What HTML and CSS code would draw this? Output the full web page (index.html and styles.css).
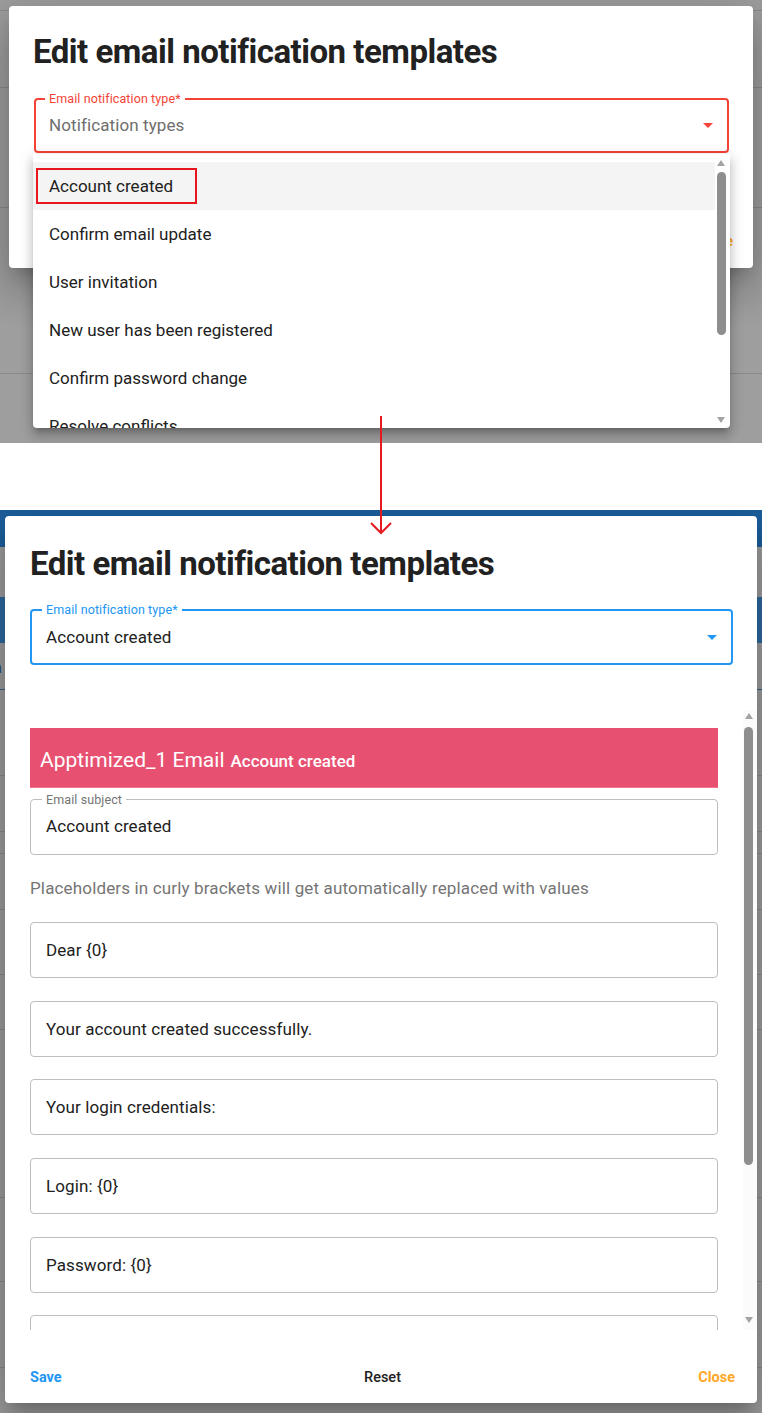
FILE: index.html
```html
<!DOCTYPE html>
<html lang="en">
<head>
<meta charset="utf-8">
<title>Edit email notification templates</title>
<link rel="stylesheet" href="styles.css">
</head>
<body>
<div class="sheet">

  <!-- Step 1: the type select is open -->
  <section class="shot shot-a">
    <div class="page page-a">
      <div class="pa-row pa-1"></div>
      <div class="pa-row pa-2"></div>
      <div class="pa-row pa-3"></div>
      <div class="pa-row pa-4"></div>
    </div>

    <div class="dialog dialog-a">
      <h1 class="dialog-title">Edit email notification templates</h1>
      <fieldset class="field select select-error select-a">
        <legend>Email notification type*</legend>
        <div class="select-row">
          <span class="select-value is-placeholder">Notification types</span>
          <svg class="caret" viewBox="0 0 24 24" width="24" height="24"><path d="M7 10l5 5 5-5z"/></svg>
        </div>
      </fieldset>
      <div class="actions actions-a">
        <button class="act act-close">Close</button>
      </div>
    </div>

    <div class="menu">
      <ul class="menu-list">
        <li class="menu-item is-hover">Account created<span class="mark"></span></li>
        <li class="menu-item">Confirm email update</li>
        <li class="menu-item">User invitation</li>
        <li class="menu-item">New user has been registered</li>
        <li class="menu-item">Confirm password change</li>
        <li class="menu-item">Resolve conflicts</li>
      </ul>
      <div class="scrollbar sb-menu">
        <span class="sb-up"></span>
        <span class="sb-thumb"></span>
        <span class="sb-fill"></span>
        <span class="sb-down"></span>
      </div>
    </div>
  </section>

  <div class="gap"></div>

  <!-- Step 2: template for the chosen type -->
  <section class="shot shot-b">
    <div class="page page-b">
      <div class="pb-appbar"></div>
      <div class="pb-row pb-sub"></div>
      <div class="pb-band"></div>
      <div class="pb-row pb-tabs"><span class="pb-tab">n</span></div>
      <div class="pb-row pb-r1"></div>
      <div class="pb-row pb-r2"></div>
      <div class="pb-row pb-r3"></div>
      <div class="pb-row pb-r4"></div>
      <div class="pb-row pb-r5"></div>
      <div class="pb-row pb-r6"></div>
      <div class="pb-row pb-r7"></div>
      <div class="pb-row pb-r8"></div>
      <div class="pb-row pb-r9"></div>
    </div>

    <div class="dialog dialog-b">
      <h1 class="dialog-title">Edit email notification templates</h1>
      <fieldset class="field select select-focus select-b">
        <legend>Email notification type*</legend>
        <div class="select-row">
          <span class="select-value">Account created</span>
          <svg class="caret" viewBox="0 0 24 24" width="24" height="24"><path d="M7 10l5 5 5-5z"/></svg>
        </div>
      </fieldset>

      <div class="scroll">
        <div class="scroll-body">
          <div class="banner">
            <span class="banner-app">Apptimized_1 Email</span>
            <span class="banner-type">Account created</span>
          </div>

          <fieldset class="field subject">
            <legend>Email subject</legend>
            <div class="subject-value">Account created</div>
          </fieldset>

          <p class="hint">Placeholders in curly brackets will get automatically replaced with values</p>

          <div class="lines">
            <div class="line-input">Dear {0}</div>
            <div class="line-input">Your account created successfully.</div>
            <div class="line-input">Your login credentials:</div>
            <div class="line-input">Login: {0}</div>
            <div class="line-input">Password: {0}</div>
            <div class="line-input"></div>
          </div>
        </div>
        <div class="scrollbar sb-dialog">
          <span class="sb-up"></span>
          <span class="sb-thumb"></span>
          <span class="sb-fill"></span>
          <span class="sb-down"></span>
        </div>
      </div>

      <div class="actions actions-b">
        <button class="act act-save">Save</button>
        <button class="act act-reset">Reset</button>
        <button class="act act-close">Close</button>
      </div>
    </div>
  </section>

  <svg class="flow-arrow" width="762" height="1413" viewBox="0 0 762 1413">
    <path d="M381 416V533M371 523l10 10 10-10" />
  </svg>
</div>
</body>
</html>
```

FILE: styles.css
```css
* { box-sizing: border-box; }

html, body {
  margin: 0;
  padding: 0;
  background: #fff;
}

body {
  width: 762px;
  font-family: Roboto, "Liberation Sans", sans-serif;
  color: #212121;
}

.sheet {
  position: relative;
  width: 762px;
}

/* ---------- screenshot frames ---------- */
.shot {
  position: relative;
  overflow: hidden;
  background: #9e9e9e;
}
.shot-a { height: 443px; }
.shot-b { height: 903px; }
.gap { height: 67px; }

/* dimmed page behind the modal */
.page { display: flex; flex-direction: column; }
.pa-row { border-bottom: 1px solid #8a8a8a; }
.pa-1 { height: 11px; }
.pa-2 { height: 77px; }
.pa-3 { height: 120px; }
.pa-4 { height: 166px; }

.pb-appbar { height: 37px; background: #1c5f9c; }
.pb-row { border-bottom: 1px solid #8a8a8a; }
.pb-sub { height: 50px; border-bottom: 0; }
.pb-band { height: 46px; background: #2d6aa2; }
.pb-tabs { height: 47px; display: flex; align-items: center; border-bottom-color: #375f86; }
.pb-tab { font-size: 16px; color: #27496b; margin-left: -7px; padding-top: 2px; }
.pb-r1 { height: 86px; }
.pb-r2 { height: 56px; }
.pb-r3 { height: 22px; }
.pb-r4 { height: 56px; }
.pb-r5 { height: 65px; }
.pb-r6 { height: 55px; }
.pb-r7 { height: 168px; }
.pb-r8 { height: 84px; }
.pb-r9 { height: 86px; }

/* ---------- dialog ---------- */
.dialog {
  position: absolute;
  display: flex;
  flex-direction: column;
  background: #fff;
  border-radius: 4px;
  box-shadow: 0 11px 15px -7px rgba(0,0,0,.2),
              0 24px 38px 3px rgba(0,0,0,.14),
              0 9px 46px 8px rgba(0,0,0,.12);
}
.dialog-a {
  left: 9px;
  top: 6px;
  width: 744px;
  height: 262px;
  padding: 26px 24px 0 24px;
}
.dialog-b {
  left: 5px;
  top: 6px;
  width: 752px;
  height: 887px;
  padding: 28px 24px 0 25px;
}

.dialog-title {
  margin: 0;
  font-size: 33px;
  line-height: 40px;
  font-weight: 700;
  letter-spacing: -0.5px;
  color: #212121;
  white-space: nowrap;
}

/* ---------- outlined fields ---------- */
.field {
  margin: 0;
  min-width: 0;
  border-radius: 4px;
}
.field legend {
  padding: 0 4px;
  font-size: 12.5px;
  line-height: 14px;
  letter-spacing: 0.1px;
}

.select {
  border: 2px solid;
  padding: 0 7px 0 9px;
}
.select-error { border-color: #f44336; }
.select-error legend { color: #f44336; }
.select-error .caret { fill: #f44336; }
.select-focus { border-color: #2196f3; }
.select-focus legend { color: #2196f3; }
.select-focus .caret { fill: #2196f3; }

.select-a {
  margin: 20px 0 0 1px;
  padding-bottom: 8px;
}
.select-a .select-row { height: 37px; }
.select-b {
  margin-top: 19px;
  padding-left: 10px;
  padding-bottom: 6px;
}
.select-b .select-row { height: 40px; }

.select-row {
  display: flex;
  align-items: center;
  padding-left: 4px;
}
.select-value {
  flex: 1;
  font-size: 17px;
  letter-spacing: 0.1px;
  color: #212121;
}
.select-value.is-placeholder { color: #6e6e6e; }
.caret { flex: none; display: block; }

/* ---------- action bar ---------- */
.actions {
  margin-top: auto;
  display: grid;
  grid-template-columns: 1fr auto 1fr;
  align-items: center;
}
.actions-a {
  height: 73px;
  padding-top: 20px;
  margin-right: -4px;
}
.actions-a .act-close { grid-column: 3; }
.actions-b {
  height: 73px;
  padding-top: 22px;
  margin-right: -2px;
}
.act {
  border: 0;
  background: none;
  padding: 0;
  font-family: inherit;
  font-size: 14.5px;
  font-weight: 700;
  line-height: 20px;
}
.act-save { color: #2196f3; justify-self: start; }
.act-reset { color: #212121; font-weight: 500; }
.act-close { color: #ffa726; justify-self: end; }

/* ---------- select popup ---------- */
.menu {
  position: absolute;
  left: 33px;
  top: 154px;
  width: 697px;
  height: 274px;
  display: flex;
  background: #fff;
  border-radius: 0 0 4px 4px;
  box-shadow: 0 5px 5px -3px rgba(0,0,0,.2),
              0 8px 10px 1px rgba(0,0,0,.14),
              0 3px 14px 2px rgba(0,0,0,.12);
  overflow: hidden;
}
.menu-list {
  list-style: none;
  margin: 0;
  padding: 8px 0 0;
  width: 682px;
}
.menu-item {
  position: relative;
  height: 48px;
  display: flex;
  align-items: center;
  padding-left: 16px;
  font-size: 17px;
  letter-spacing: 0;
  color: #212121;
}
.menu-item.is-hover { background: #f4f4f4; }
.mark {
  position: absolute;
  left: 3px;
  top: 6px;
  width: 161px;
  height: 36px;
  border: 2px solid #e8161c;
}

/* ---------- scrollbars ---------- */
.scrollbar {
  display: flex;
  flex-direction: column;
  align-items: center;
  flex: none;
}
.sb-up, .sb-down {
  width: 0;
  height: 0;
  border-left: 4.5px solid transparent;
  border-right: 4.5px solid transparent;
}
.sb-up { border-bottom: 6px solid #a3a3a3; }
.sb-down { border-top: 6px solid #a3a3a3; }
.sb-thumb {
  width: 9px;
  background: #8e8e8e;
  border-radius: 5px;
}
.sb-fill { flex: 1; }

.sb-menu {
  width: 15px;
  padding: 6px 3px 5px 0;
}
.sb-menu .sb-thumb { height: 163px; margin-top: 6px; }

.sb-dialog {
  width: 14px;
  margin-left: auto;
  padding: 3px 3px 7px 0;
  background: #fbfbfb;
}
.sb-dialog .sb-thumb { height: 438px; margin-top: 8px; }

/* ---------- template body ---------- */
.scroll {
  margin-top: 45px;
  margin-right: -24px;
  height: 620px;
  display: flex;
  overflow: hidden;
}
.scroll-body {
  width: 688px;
  padding-top: 18px;
}

.banner {
  height: 60px;
  display: flex;
  align-items: center;
  gap: 6px;
  padding: 4px 0 0 10px;
  background: #e85071;
  border-bottom: 1px solid #ef7590;
  color: #fff;
}
.banner-app {
  font-size: 21px;
  line-height: 24px;
}
.banner-type {
  font-size: 17px;
  font-weight: 500;
  line-height: 24px;
  padding-top: 2px;
}

.subject {
  margin-top: 4.5px;
  border: 1px solid #bdbdbd;
  padding: 0 11px 9.5px 11px;
}
.subject legend { color: #757575; }
.subject-value {
  height: 38px;
  display: flex;
  align-items: center;
  padding-left: 4px;
  font-size: 17px;
  letter-spacing: 0.1px;
}

.hint {
  margin: 21px 0 0;
  font-size: 17px;
  line-height: 24px;
  letter-spacing: 0.15px;
  color: #757575;
}

.lines {
  margin-top: 22px;
  display: flex;
  flex-direction: column;
  gap: 22.7px;
}
.line-input {
  height: 56px;
  flex: none;
  display: flex;
  align-items: center;
  padding-left: 15px;
  border: 1px solid #bdbdbd;
  border-radius: 4px;
  font-size: 17px;
  letter-spacing: 0.1px;
  color: #212121;
}

/* ---------- connector between the two steps ---------- */
.flow-arrow {
  position: absolute;
  left: 0;
  top: 0;
  pointer-events: none;
}
.flow-arrow path {
  fill: none;
  stroke: #e5191f;
  stroke-width: 2;
}
```
